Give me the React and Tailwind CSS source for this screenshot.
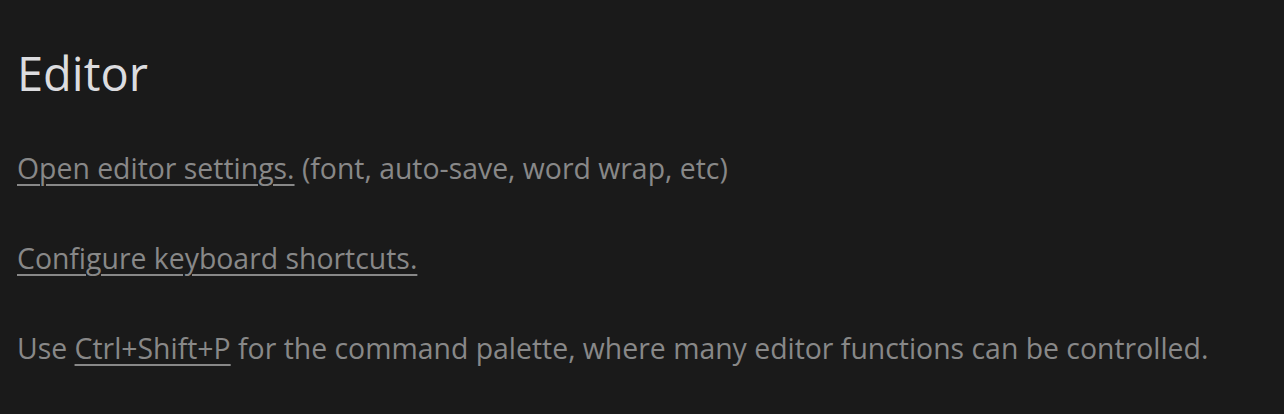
export default function App() {
    return (
        <div className="min-h-[414px] w-full bg-[#1a1a1a] px-[17px] pt-[43px] font-['Open_Sans',sans-serif]">
            <h1 className="text-[47px] leading-[60px] text-[#dcdcdf]">Editor</h1>
            <div className="mt-[45px] flex flex-col gap-[50px] text-[28.4px] leading-[40px] text-[#888888]">
                <p>
                    <a className="underline decoration-2 underline-offset-[5px] decoration-[#888888]" href="#">Open editor settings.</a> (font, auto-save, word wrap, etc)
                </p>
                <p>
                    <a className="underline decoration-2 underline-offset-[5px] decoration-[#888888]" href="#">Configure keyboard shortcuts.</a>
                </p>
                <p>
                    Use <a className="underline decoration-2 underline-offset-[5px] decoration-[#888888]" href="#">Ctrl+Shift+P</a> for the command palette, where many editor functions can be controlled.
                </p>
            </div>
        </div>
    );
}
